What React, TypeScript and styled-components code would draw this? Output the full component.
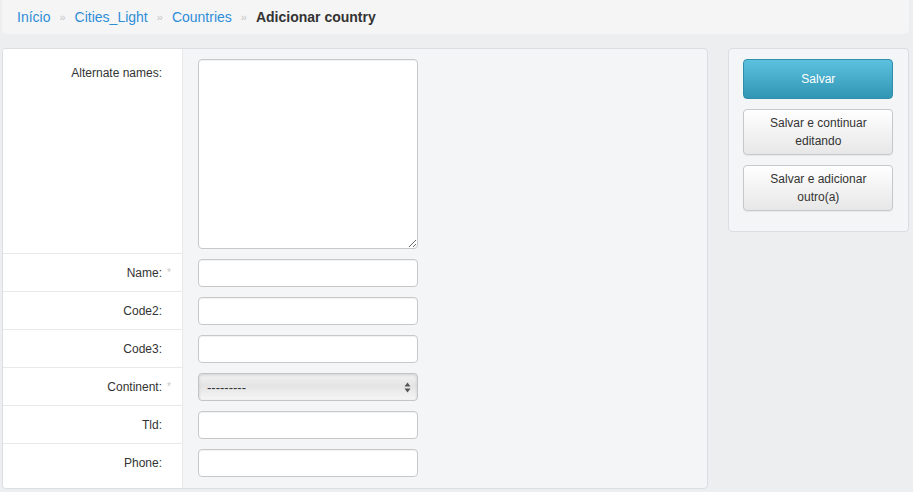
import React from "react";
import styled, { createGlobalStyle } from "styled-components";

const Global = createGlobalStyle`
  html, body { margin: 0; padding: 0; background: #edeef0; }
  body { font-family: "Liberation Sans", Arial, Helvetica, sans-serif; font-size: 12px; color: #333; }
  * { box-sizing: border-box; }
`;

const Page = styled.div`
  padding: 0 4px 0 2px;
`;

const Breadcrumb = styled.nav`
  height: 34px;
  background: #f5f5f6;
  border-radius: 0 0 5px 5px;
  display: flex;
  align-items: center;
  padding: 0 0 1px 15px;
  font-size: 14px;
`;

const Crumb = styled.a`
  color: #2f8dd6;
  text-decoration: none;
`;

const Current = styled.span`
  color: #333;
  font-weight: bold;
`;

const Sep = styled.span`
  color: #c6c6c6;
  font-size: 11px;
  padding: 0 9px;
`;

const Main = styled.div`
  display: flex;
  align-items: flex-start;
  gap: 20px;
  margin-top: 14px;
`;

const FormPanel = styled.div`
  width: 708px;
  border: 1px solid #dcdde0;
  border-radius: 4px;
  overflow: hidden;
  background: #f4f5f7;
`;

const Row = styled.div`
  display: flex;
`;

const LabelCell = styled.div<{ $tall?: boolean; $last?: boolean }>`
  width: 180px;
  flex: none;
  background: #fff;
  border-right: 1px solid #e8e9eb;
  border-bottom: ${(p) => (p.$last ? "none" : "1px solid #e8e9eb")};
  display: flex;
  justify-content: flex-end;
  align-items: ${(p) => (p.$tall ? "flex-start" : "center")};
  padding-top: ${(p) => (p.$tall ? "15px" : p.$last ? "0" : "0")};
  padding-bottom: ${(p) => (p.$last ? "6px" : "0")};
  line-height: 18px;
  font-size: 12px;
  color: #333;
`;

const Mark = styled.span`
  width: 20px;
  flex: none;
  padding-left: 5px;
  color: #c8c8c8;
  font-size: 10px;
  line-height: 14px;
`;

const FieldCell = styled.div<{ $tall?: boolean; $last?: boolean }>`
  flex: 1;
  padding: ${(p) => (p.$tall ? "10px 0 5px 15px" : "5px 0 5px 15px")};
  height: ${(p) => (p.$tall ? "auto" : p.$last ? "44px" : "38px")};
  display: flex;
  align-items: ${(p) => (p.$last ? "flex-start" : "center")};
`;

const TextArea = styled.textarea`
  width: 220px;
  height: 190px;
  border: 1px solid #c8c8c8;
  border-radius: 4px;
  background: #fff;
  box-shadow: inset 0 1px 1px rgba(0, 0, 0, 0.06);
  display: block;
  margin: 0;
`;

const Input = styled.input`
  width: 220px;
  height: 28px;
  border: 1px solid #c8c8c8;
  border-radius: 4px;
  background: #fff;
  box-shadow: inset 0 1px 1px rgba(0, 0, 0, 0.06);
  margin: 0;
`;

const SelectBox = styled.div`
  width: 220px;
  height: 28px;
  border: 1px solid #c4c4c4;
  border-radius: 4px;
  background: linear-gradient(#f3f3f3, #e4e4e4 45%, #f6f6f6);
  box-shadow: inset 0 1px 3px rgba(0, 0, 0, 0.15);
  display: flex;
  align-items: center;
  justify-content: space-between;
  padding: 0 6px 0 8px;
  font-size: 13px;
  color: #333;
`;

const Arrows = styled.svg`
  width: 7px;
  height: 11px;
`;

const SidePanel = styled.div`
  width: 181px;
  border: 1px solid #dcdde0;
  border-radius: 4px;
  background: #f4f5f7;
  padding: 10px 14px 20px;
  display: flex;
  flex-direction: column;
  gap: 10px;
`;

const Button = styled.button<{ $primary?: boolean }>`
  width: 150px;
  min-height: 40px;
  border-radius: 4px;
  font-family: inherit;
  font-size: 12px;
  line-height: 18px;
  padding: 4px 8px;
  cursor: pointer;
  color: ${(p) => (p.$primary ? "#fff" : "#333")};
  border: 1px solid ${(p) => (p.$primary ? "#2e8fad" : "#c8c8c8")};
  background: ${(p) =>
    p.$primary
      ? "linear-gradient(#5cc1de, #3196b3)"
      : "linear-gradient(#ffffff, #e7e7e7)"};
  box-shadow: ${(p) => (p.$primary ? "none" : "0 1px 1px rgba(0,0,0,0.05)")};
`;

const fields: { label: string; required?: boolean; kind?: "select" }[] = [
  { label: "Name:", required: true },
  { label: "Code2:" },
  { label: "Code3:" },
  { label: "Continent:", required: true, kind: "select" },
  { label: "Tld:" },
  { label: "Phone:" },
];

export default function App() {
  return (
    <>
      <Global />
      <Page>
        <Breadcrumb>
          <Crumb href="#">Início</Crumb>
          <Sep>»</Sep>
          <Crumb href="#">Cities_Light</Crumb>
          <Sep>»</Sep>
          <Crumb href="#">Countries</Crumb>
          <Sep>»</Sep>
          <Current>Adicionar country</Current>
        </Breadcrumb>
        <Main>
          <FormPanel>
            <Row>
              <LabelCell $tall>
                Alternate names:<Mark />
              </LabelCell>
              <FieldCell $tall>
                <TextArea />
              </FieldCell>
            </Row>
            {fields.map((f, i) => {
              const last = i === fields.length - 1;
              return (
                <Row key={f.label}>
                  <LabelCell $last={last}>
                    {f.label}
                    <Mark>{f.required ? "*" : ""}</Mark>
                  </LabelCell>
                  <FieldCell $last={last}>
                    {f.kind === "select" ? (
                      <SelectBox>
                        <span>---------</span>
                        <Arrows viewBox="0 0 7 11">
                          <path d="M3.5 0.5 L6.5 4.5 L0.5 4.5 Z" fill="#555" />
                          <path d="M3.5 10.5 L6.5 6.5 L0.5 6.5 Z" fill="#555" />
                        </Arrows>
                      </SelectBox>
                    ) : (
                      <Input />
                    )}
                  </FieldCell>
                </Row>
              );
            })}
          </FormPanel>
          <SidePanel>
            <Button $primary>Salvar</Button>
            <Button>Salvar e continuar editando</Button>
            <Button>Salvar e adicionar outro(a)</Button>
          </SidePanel>
        </Main>
      </Page>
    </>
  );
}
